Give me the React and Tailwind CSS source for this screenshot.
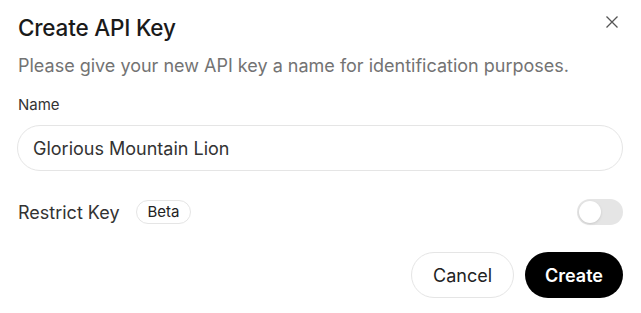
import React from 'react';

export default function App() {
    return (
        <div className="w-[641px] h-[313px] bg-white font-['Inter',sans-serif] relative">
            <button className="absolute right-[21px] top-[14px] w-[16px] h-[16px] flex items-center justify-center text-[#555]">
                <svg width="14" height="14" viewBox="0 0 14 14" fill="none" stroke="currentColor" strokeWidth="1.3">
                    <path d="M1.5 1.5 L12.5 12.5 M12.5 1.5 L1.5 12.5" />
                </svg>
            </button>
            <div className="pl-[18px] pr-[18px] pt-[13px]">
                <h2 className="text-[22.5px] leading-[30px] font-medium text-[#1a1a1a] tracking-[-0.2px]">Create API Key</h2>
                <p className="mt-[11px] text-[18px] leading-[24px] text-[#737373]">
                    Please give your new API key a name for identification purposes.
                </p>
                <label className="block mt-[17px] text-[15px] leading-[20px] text-[#333]">Name</label>
                <div className="mt-[10px] -ml-[1px] h-[46px] rounded-full border border-[#e5e5e5] flex items-center px-[15px] text-[18px] text-[#333]">
                    Glorious Mountain Lion
                </div>
                <div className="mt-[28px] flex items-center justify-between h-[26px]">
                    <div className="flex items-center gap-[16px]">
                        <span className="text-[18px] text-[#333]">Restrict Key</span>
                        <span className="h-[24px] px-[11px] rounded-full border border-[#e5e5e5] flex items-center text-[15px] text-[#222]">Beta</span>
                    </div>
                    <div className="w-[46px] h-[26px] rounded-full bg-[#e5e5e5] p-[2px] flex items-center">
                        <div className="w-[22px] h-[22px] rounded-full bg-white shadow-sm" />
                    </div>
                </div>
                <div className="mt-[27px] flex justify-end gap-[11px]">
                    <button className="w-[103px] h-[46px] rounded-full border border-[#e5e5e5] text-[18px] text-[#222]">Cancel</button>
                    <button className="w-[98px] h-[46px] rounded-full bg-black text-white text-[18px] font-semibold">Create</button>
                </div>
            </div>
        </div>
    );
}
